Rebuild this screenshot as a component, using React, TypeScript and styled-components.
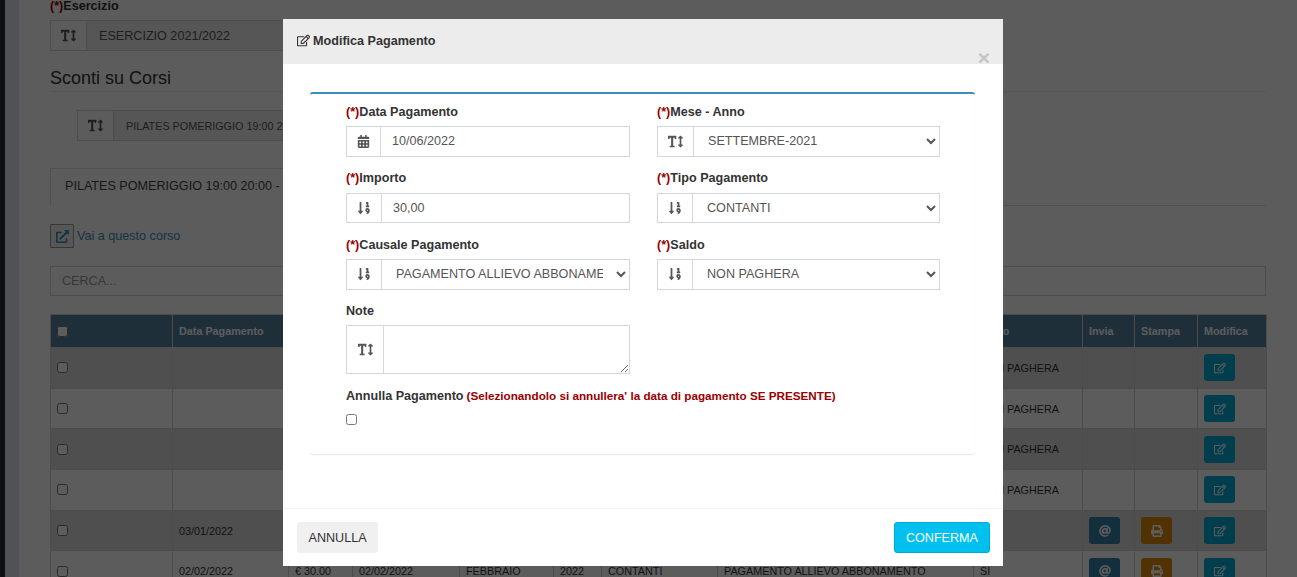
import React from 'react';
import styled, { createGlobalStyle } from 'styled-components';
import {
  FaAt,
  FaCalendarAlt,
  FaExternalLinkAlt,
  FaPrint,
  FaRegEdit,
  FaSortNumericDown,
  FaTextHeight,
} from 'react-icons/fa';

const GlobalStyle = createGlobalStyle`
  html, body {
    margin: 0;
    height: 100%;
    overflow: hidden;
    background: #fff;
    font-family: "Liberation Sans", Arial, sans-serif;
    color: #333;
  }
`;

const Shell = styled.div`
  display: flex;
  height: 577px;
  overflow: hidden;
`;

const Sidebar = styled.div`
  flex: 0 0 19px;
  display: flex;
  &::before {
    content: '';
    width: 5px;
    background: #222d32;
  }
  &::after {
    content: '';
    flex: 1;
    background: #dde3ea;
  }
`;

const Main = styled.div`
  flex: 1;
  margin-top: -3px;
  padding: 0 31px;
  min-width: 0;
`;

const Label = styled.div`
  font-size: 12.6px;
  font-weight: 700;
  line-height: 18px;
  color: #333;
`;

const BackLabel = styled(Label)`
  margin-bottom: 5px;
`;

const Req = styled.span`
  color: #990000;
`;

const BackGroup = styled.div<{ $width: number; $indent?: number; $size?: number }>`
  display: flex;
  width: ${({ $width }) => $width}px;
  height: 31px;
  margin-left: ${({ $indent }) => $indent ?? 0}px;
  box-sizing: border-box;
  border: 1px solid #d2d6de;
  background: #eee;
  font-size: ${({ $size }) => $size ?? 12.6}px;
  color: #555;
  align-items: center;
`;

const BackAddon = styled.div`
  flex: 0 0 36px;
  height: 100%;
  box-sizing: border-box;
  border-right: 1px solid #d2d6de;
  background: #fff;
  display: flex;
  align-items: center;
  justify-content: center;
  font-size: 15px;
`;

const BackValue = styled.div`
  padding-left: 12px;
  white-space: nowrap;
`;

const PageTitle = styled.h3`
  margin: 16px 0 18px;
  padding-bottom: 2px;
  border-bottom: 1px solid #eee;
  font-size: 18px;
  font-weight: 400;
  line-height: 22px;
`;

const TabBar = styled.div`
  margin-top: 27px;
  height: 37px;
  border-bottom: 1px solid #ddd;
`;

const Tab = styled.div`
  height: 38px;
  width: 480px;
  box-sizing: border-box;
  padding: 9px 14px 0;
  border: 1px solid #ddd;
  border-bottom: 0;
  background: #fff;
  font-size: 12.6px;
  line-height: 16px;
  color: #444;
`;

const LinkRow = styled.div`
  display: flex;
  align-items: center;
  gap: 3px;
  margin-top: 18px;
  font-size: 12.6px;
  color: #3c8dbc;
`;

const LinkButton = styled.div`
  width: 24px;
  height: 24px;
  box-sizing: border-box;
  border: 1px solid #999;
  background: #f0f0f0;
  border-radius: 1px;
  display: flex;
  align-items: center;
  justify-content: center;
  font-size: 13px;
`;

const Search = styled.div`
  margin-top: 18px;
  height: 30px;
  box-sizing: border-box;
  border: 1px solid #d2d6de;
  padding: 0 11px;
  font-size: 12.6px;
  line-height: 28px;
  color: #999;
`;

const Table = styled.table`
  margin-top: 18px;
  width: 1216px;
  table-layout: fixed;
  border-collapse: collapse;
  font-size: 10.8px;
  color: #333;
`;

const HeadCell = styled.th`
  height: 33px;
  padding: 0 6px;
  box-sizing: border-box;
  background: #55829f;
  border: 1px solid #d2d2d2;
  color: #fff;
  text-align: left;
  font-weight: 700;
  white-space: nowrap;
`;

const Row = styled.tr`
  height: 40.7px;
  background: #fff;
  &:nth-child(odd) {
    background: #dcdcdc;
  }
`;

const Cell = styled.td`
  padding: 0 6px;
  box-sizing: border-box;
  border: 1px solid #d2d2d2;
  white-space: nowrap;
  overflow: hidden;
`;

const SmallCheck = styled.input.attrs({ type: 'checkbox' })`
  display: block;
  width: 11px;
  height: 11px;
  margin: 0;
`;

const ActionButton = styled.div<{ $color: string }>`
  width: 31px;
  height: 27px;
  border-radius: 3px;
  background: ${({ $color }) => $color};
  color: #fff;
  display: flex;
  align-items: center;
  justify-content: center;
  font-size: 12px;
`;

const Backdrop = styled.div`
  position: fixed;
  inset: 0;
  background: rgba(0, 0, 0, 0.64);
`;

const Modal = styled.div`
  position: fixed;
  top: 19px;
  left: 283px;
  width: 720px;
  height: 547px;
  display: flex;
  flex-direction: column;
  background: #fff;
`;

const ModalHeader = styled.div`
  position: relative;
  flex: 0 0 45px;
  box-sizing: border-box;
  padding: 13px 14px 0;
  background: #ececec;
  font-size: 12.6px;
  font-weight: 700;
  line-height: 18px;
  color: #333;
  svg {
    font-size: 13px;
    vertical-align: -2px;
    margin-right: 3px;
  }
`;

const Close = styled.span`
  position: absolute;
  right: 13px;
  top: 27px;
  font-size: 21px;
  line-height: 24px;
  font-weight: 700;
  color: #c4c4c4;
`;

const ModalBody = styled.div`
  flex: 1;
  padding: 28px 28px 0 27px;
`;

const FormBox = styled.div`
  height: 362px;
  box-sizing: border-box;
  padding: 9px 35px 0 36px;
  border-top: 2px solid #3c8dbc;
  border-radius: 3px;
  box-shadow: 0 1px 1px rgba(0, 0, 0, 0.1);
`;

const FormGrid = styled.div`
  display: grid;
  grid-template-columns: 284px 283px;
  column-gap: 27px;
  row-gap: 12.65px;
`;

const Field = styled.div`
  min-width: 0;
`;

const InputGroup = styled.div<{ $height?: number }>`
  display: flex;
  height: ${({ $height }) => $height ?? 30.6}px;
  margin-top: 5.2px;
  box-sizing: border-box;
  border: 1px solid #d2d6de;
`;

const Addon = styled.div<{ $width: number }>`
  flex: 0 0 ${({ $width }) => $width}px;
  box-sizing: border-box;
  border-right: 1px solid #d2d6de;
  display: flex;
  align-items: center;
  justify-content: center;
  color: #555;
  font-size: 13px;
`;

const TextHeightIcon = styled(FaTextHeight)`
  font-size: 15px;
`;

const SortIcon = styled(FaSortNumericDown)`
  font-size: 14px;
`;

const TextInput = styled.input`
  flex: 1;
  min-width: 0;
  border: 0;
  outline: 0;
  padding: 0 11px;
  font: 12.6px "Liberation Sans", Arial, sans-serif;
  color: #555;
  background: transparent;
`;

const Select = styled.select`
  flex: 1;
  min-width: 0;
  border: 0;
  outline: 0;
  padding: 0 10px 0 10px;
  font: 12.6px "Liberation Sans", Arial, sans-serif;
  color: #555;
  background: #fff;
`;

const TextArea = styled.textarea`
  flex: 1;
  min-width: 0;
  border: 0;
  outline: 0;
  padding: 6px 12px;
  font: 12.6px "Liberation Sans", Arial, sans-serif;
  background: transparent;
`;

const Wide = styled.div`
  grid-column: 1 / -1;
`;

const Hint = styled.span`
  color: #990000;
  font-size: 11.7px;
  margin-left: 3px;
`;

const CancelCheck = styled(SmallCheck)`
  margin-top: 9px;
`;

const ModalFooter = styled.div`
  flex: 0 0 58px;
  box-sizing: border-box;
  padding: 13px 13px 13px 14px;
  border-top: 1px solid #f4f4f4;
  display: flex;
  justify-content: space-between;
`;

const FooterButton = styled.button<{ $primary?: boolean }>`
  height: 31px;
  padding: 0 ${({ $primary }) => ($primary ? 11 : 10.5)}px;
  border-radius: 3px;
  border: 1px solid ${({ $primary }) => ($primary ? '#00acd6' : '#f0f0f0')};
  background: ${({ $primary }) => ($primary ? '#00c0ef' : '#f0f0f0')};
  color: ${({ $primary }) => ($primary ? '#fff' : '#333')};
  font: 12.6px "Liberation Sans", Arial, sans-serif;
`;

const widths = [122, 116, 64, 107, 94, 48, 116, 256, 109, 52, 63, 69];
const heads = ['', 'Data Pagamento', 'Importo', 'Data Scadenza', 'Mese', 'Anno', 'Tipo', 'Causale', 'Saldo', 'Invia', 'Stampa', 'Modifica'];

const rows = [
  ['', '', '', '', '', '', '', 'NON PAGHERA'],
  ['', '', '', '', '', '', '', 'NON PAGHERA'],
  ['', '', '', '', '', '', '', 'NON PAGHERA'],
  ['', '', '', '', '', '', '', 'NON PAGHERA'],
  ['03/01/2022', '€ 30.00', '03/01/2022', 'GENNAIO', '2022', 'CONTANTI', 'PAGAMENTO ALLIEVO ABBONAMENTO', 'SI'],
  ['02/02/2022', '€ 30.00', '02/02/2022', 'FEBBRAIO', '2022', 'CONTANTI', 'PAGAMENTO ALLIEVO ABBONAMENTO', 'SI'],
];

const App = () => (
  <>
    <GlobalStyle />
    <Shell>
      <Sidebar />
      <Main>
        <BackLabel><Req>(*)</Req>Esercizio</BackLabel>
        <BackGroup $width={600}>
          <BackAddon><FaTextHeight /></BackAddon>
          <BackValue>ESERCIZIO 2021/2022</BackValue>
        </BackGroup>
        <PageTitle>Sconti su Corsi</PageTitle>
        <BackGroup $width={500} $indent={27} $size={10.8}>
          <BackAddon><FaTextHeight /></BackAddon>
          <BackValue>PILATES POMERIGGIO 19:00 20:00</BackValue>
        </BackGroup>
        <TabBar>
          <Tab>PILATES POMERIGGIO 19:00 20:00 - LUN</Tab>
        </TabBar>
        <LinkRow>
          <LinkButton><FaExternalLinkAlt /></LinkButton>
          Vai a questo corso
        </LinkRow>
        <Search>CERCA...</Search>
        <Table>
          <colgroup>
            {widths.map((w, i) => <col key={i} width={w} />)}
          </colgroup>
          <thead>
            <tr>
              {heads.map((h, i) => (
                <HeadCell key={i}>{i === 0 ? <SmallCheck /> : h}</HeadCell>
              ))}
            </tr>
          </thead>
          <tbody>
            {rows.map((r, i) => (
              <Row key={i}>
                <Cell><SmallCheck /></Cell>
                {r.map((v, j) => <Cell key={j}>{v}</Cell>)}
                <Cell>
                  {r[0] && <ActionButton $color="#367fa9"><FaAt /></ActionButton>}
                </Cell>
                <Cell>
                  {r[0] && <ActionButton $color="#e08e0b"><FaPrint /></ActionButton>}
                </Cell>
                <Cell>
                  <ActionButton $color="#00acd6"><FaRegEdit /></ActionButton>
                </Cell>
              </Row>
            ))}
          </tbody>
        </Table>
      </Main>
    </Shell>
    <Backdrop />
    <Modal>
      <ModalHeader>
        <FaRegEdit />Modifica Pagamento
        <Close>×</Close>
      </ModalHeader>
      <ModalBody>
        <FormBox>
          <FormGrid>
            <Field>
              <Label><Req>(*)</Req>Data Pagamento</Label>
              <InputGroup>
                <Addon $width={34}><FaCalendarAlt /></Addon>
                <TextInput defaultValue="10/06/2022" />
              </InputGroup>
            </Field>
            <Field>
              <Label><Req>(*)</Req>Mese - Anno</Label>
              <InputGroup>
                <Addon $width={36}><TextHeightIcon /></Addon>
                <Select defaultValue="SETTEMBRE-2021">
                  <option>SETTEMBRE-2021</option>
                </Select>
              </InputGroup>
            </Field>
            <Field>
              <Label><Req>(*)</Req>Importo</Label>
              <InputGroup>
                <Addon $width={35}><SortIcon /></Addon>
                <TextInput defaultValue="30,00" />
              </InputGroup>
            </Field>
            <Field>
              <Label><Req>(*)</Req>Tipo Pagamento</Label>
              <InputGroup>
                <Addon $width={35}><SortIcon /></Addon>
                <Select defaultValue="CONTANTI">
                  <option>CONTANTI</option>
                </Select>
              </InputGroup>
            </Field>
            <Field>
              <Label><Req>(*)</Req>Causale Pagamento</Label>
              <InputGroup>
                <Addon $width={35}><SortIcon /></Addon>
                <Select defaultValue="PAGAMENTO ALLIEVO ABBONAMENTO">
                  <option>PAGAMENTO ALLIEVO ABBONAMENTO</option>
                </Select>
              </InputGroup>
            </Field>
            <Field>
              <Label><Req>(*)</Req>Saldo</Label>
              <InputGroup>
                <Addon $width={35}><SortIcon /></Addon>
                <Select defaultValue="NON PAGHERA">
                  <option>NON PAGHERA</option>
                </Select>
              </InputGroup>
            </Field>
            <Field>
              <Label>Note</Label>
              <InputGroup $height={49}>
                <Addon $width={37}><TextHeightIcon /></Addon>
                <TextArea />
              </InputGroup>
            </Field>
            <Field />
            <Wide>
              <Label>
                Annulla Pagamento
                <Hint>(Selezionandolo si annullera' la data di pagamento SE PRESENTE)</Hint>
              </Label>
              <CancelCheck />
            </Wide>
          </FormGrid>
        </FormBox>
      </ModalBody>
      <ModalFooter>
        <FooterButton>ANNULLA</FooterButton>
        <FooterButton $primary>CONFERMA</FooterButton>
      </ModalFooter>
    </Modal>
  </>
);

export default App;
